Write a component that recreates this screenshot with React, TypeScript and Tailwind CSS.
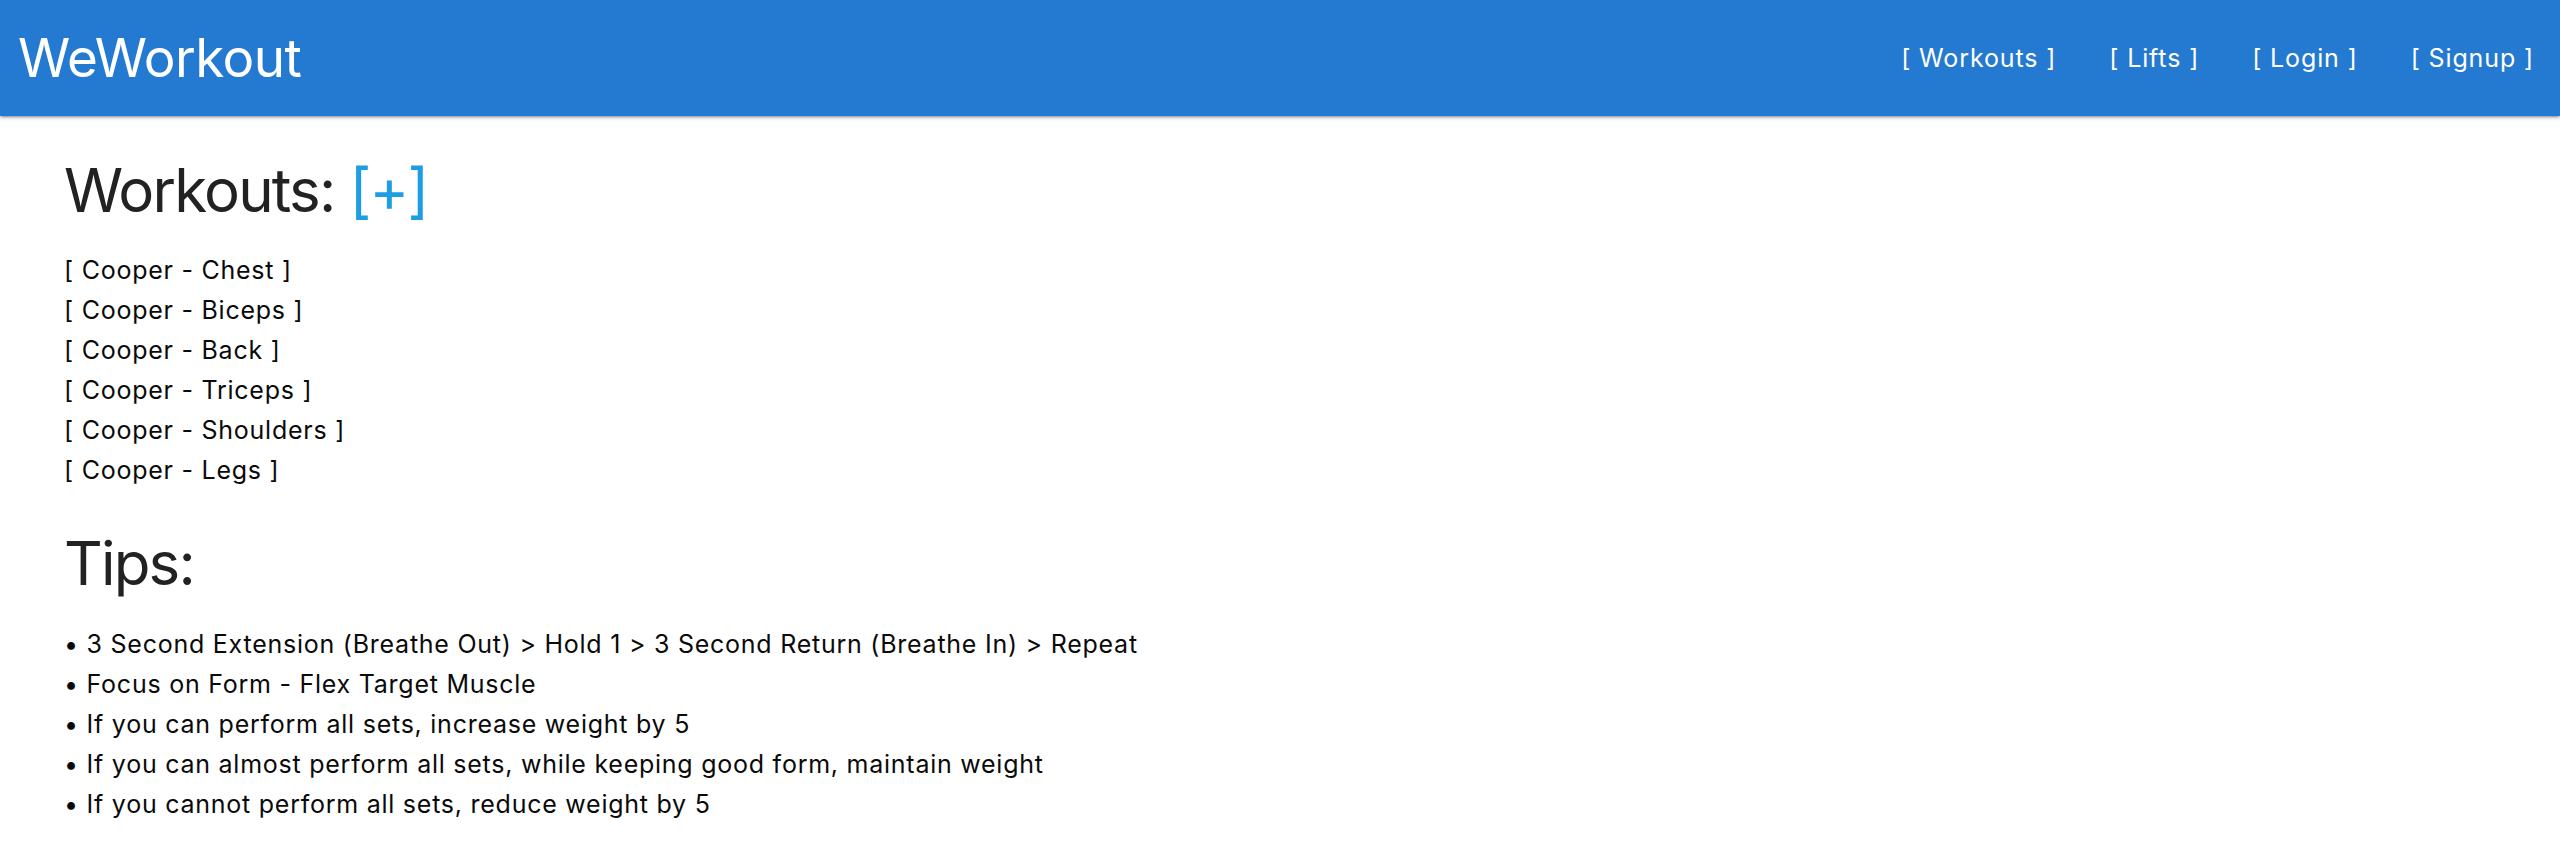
import React from "react";

const workouts = ["Chest", "Biceps", "Back", "Triceps", "Shoulders", "Legs"];

const tips = [
  "3 Second Extension (Breathe Out) > Hold 1 > 3 Second Return (Breathe In) > Repeat",
  "Focus on Form - Flex Target Muscle",
  "If you can perform all sets, increase weight by 5",
  "If you can almost perform all sets, while keeping good form, maintain weight",
  "If you cannot perform all sets, reduce weight by 5",
];

const navLinks = ["Workouts", "Lifts", "Login", "Signup"];

export default function App() {
  return (
    <div className="min-h-screen bg-white font-['Inter',sans-serif]">
      {/* top bar */}
      <header className="flex h-[116px] items-center justify-between bg-[#2479d1] pl-[18px] pr-[26px] shadow-[0_2px_2px_0_rgba(0,0,0,0.14),0_3px_1px_-2px_rgba(0,0,0,0.12),0_1px_5px_0_rgba(0,0,0,0.2)]">
        <a href="#" className="text-[53px] leading-none tracking-[-0.01em] text-white">
          WeWorkout
        </a>
        <nav className="flex items-center gap-[53px]">
          {navLinks.map((link) => (
            <a key={link} href="#" className="text-[25px] leading-none tracking-[0.035em] text-white">
              [ {link} ]
            </a>
          ))}
        </nav>
      </header>

      <main className="pl-[64px]">
        <h3 className="mt-[41px] text-[60px] leading-[66px] tracking-[-0.03em] text-[#222]">
          Workouts: <a href="#" className="text-[#1e9de3]">[+]</a>
        </h3>
        <ul className="mt-[27px] text-[25px] leading-[40px] tracking-[0.03em] text-[#0a0a0a]">
          {workouts.map((w) => (
            <li key={w}>
              <a href="#">[ Cooper - {w} ]</a>
            </li>
          ))}
        </ul>

        <h3 className="mt-[40px] text-[60px] leading-[66px] tracking-[-0.03em] text-[#222]">Tips:</h3>
        <ul className="mt-[28px] text-[25px] leading-[40px] tracking-[0.03em] text-[#0a0a0a]">
          {tips.map((t) => (
            <li key={t}>• {t}</li>
          ))}
        </ul>
      </main>
    </div>
  );
}
